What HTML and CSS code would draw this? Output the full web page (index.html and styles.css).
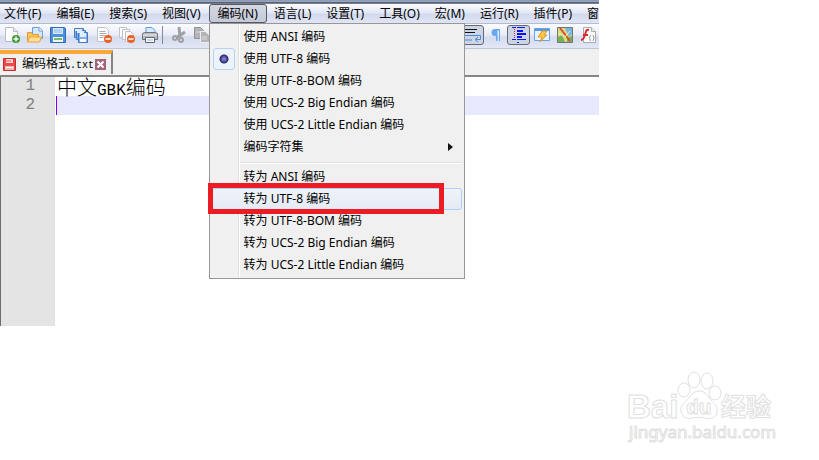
FILE: index.html
```html
<!DOCTYPE html>
<html lang="zh-CN">
<head>
  <meta charset="UTF-8">
  <title>编码格式.txt</title>
  <link rel="stylesheet" href="styles.css">
</head>
<body>

  <main class="app">
    <div class="titlebar"></div>

    <!-- Menu bar -->
    <nav class="menubar">
      <button class="menu">文件(F)</button>
      <button class="menu">编辑(E)</button>
      <button class="menu">搜索(S)</button>
      <button class="menu">视图(V)</button>
      <div class="menu-wrap">
        <button class="menu open">编码(N)</button>
        <div class="dropdown">
          <label class="item"><input type="radio" name="enc">使用 ANSI 编码</label>
          <label class="item"><input type="radio" name="enc" checked>使用 UTF-8 编码</label>
          <label class="item"><input type="radio" name="enc">使用 UTF-8-BOM 编码</label>
          <label class="item"><input type="radio" name="enc">使用 UCS-2 Big Endian 编码</label>
          <label class="item"><input type="radio" name="enc">使用 UCS-2 Little Endian 编码</label>
          <button class="item sub">编码字符集
            <svg width="5" height="8" viewBox="0 0 5 8"><path d="M0 0l5 4-5 4z" fill="#111"/></svg>
          </button>
          <hr>
          <button class="item">转为 ANSI 编码</button>
          <button class="item hover">转为 UTF-8 编码<span class="mark"></span></button>
          <button class="item">转为 UTF-8-BOM 编码</button>
          <button class="item">转为 UCS-2 Big Endian 编码</button>
          <button class="item">转为 UCS-2 Little Endian 编码</button>
        </div>
      </div>
      <button class="menu">语言(L)</button>
      <button class="menu">设置(T)</button>
      <button class="menu">工具(O)</button>
      <button class="menu">宏(M)</button>
      <button class="menu">运行(R)</button>
      <button class="menu">插件(P)</button>
      <button class="menu">窗</button>
    </nav>

    <!-- Toolbar -->
    <div class="toolbar">
      <button class="tool" aria-label="新建">
        <svg viewBox="0 0 16 16"><path d="M1.500 .5h8l4 4v10h-12z" fill="#fdfdfd" stroke="#b9bcc4"/><path d="M9.500 .5v4h4" fill="#e8e8ee" stroke="#b9bcc4"/><circle cx="12" cy="12" r="4" fill="#3d9b35"/><path d="M9.500 12h5M12 9.500v5" stroke="#fff" stroke-width="1.500"/></svg>
      </button>
      <button class="tool" aria-label="打开">
        <svg viewBox="0 0 16 16"><path d="M5.500 .5h7l3 3v8h-10z" fill="#d4e8fb" stroke="#6f9fd8"/><path d="M12 .5v3.500h3.500" fill="#fff" stroke="#6f9fd8"/><path d="M.5 14.500v-9h4l1 2h6v7z" fill="#f7c65c" stroke="#e09a2c"/><path d="M.5 15l2-5h12l-2 5z" fill="#ffe09a" stroke="#e8a33a"/></svg>
      </button>
      <button class="tool" aria-label="保存">
        <svg viewBox="0 0 16 16"><path d="M.5 .5h14l1 1v14H.5z" fill="#4e8fe0" stroke="#2f68bd"/><path d="M3 1h10v6H3z" fill="#d8ebfb"/><path d="M4 3h8M4 5h8" stroke="#8ab8e8"/><path d="M3 10h10v5H3z" fill="#eef7e8"/><path d="M4 12h8" stroke="#78bd60" stroke-width="2"/></svg>
      </button>
      <button class="tool" aria-label="保存全部">
        <svg viewBox="0 0 16 16"><g fill="#7fb0ea" stroke="#4479c4"><path d="M1.500 1.500h9v9h-9z"/><path d="M3.500 3.500h9v9h-9z"/><path d="M5.500 5.500h9v10h-9z"/></g><path d="M2 2h7v2H2zM4 4h7v2H4zM7 6h6v4H7z" fill="#e0effd"/><path d="M7 12h6v3H7z" fill="#fff"/></svg>
      </button>
      <button class="tool" aria-label="关闭">
        <svg viewBox="0 0 16 16"><path d="M1.500 .5h8l3 3v11h-11z" fill="#fdfdfd" stroke="#bfc1c8"/><path d="M3.500 4.500h6M3.500 6.500h7M3.500 8.500h6M3.500 10.500h4" stroke="#aaa"/><circle cx="12" cy="12" r="4" fill="#e8622a"/><path d="M9.500 12h5" stroke="#fff" stroke-width="1.500"/></svg>
      </button>
      <button class="tool" aria-label="关闭全部">
        <svg viewBox="0 0 16 16"><g fill="#fdfdfd" stroke="#bfc1c8"><path d="M.5 .5h7v10h-7z"/><path d="M3.500 2.500h7v10h-7z"/><path d="M6.500 4.500h5l3 3v7h-8z"/></g><circle cx="12" cy="12" r="4" fill="#e8622a"/><path d="M9.500 12h5" stroke="#fff" stroke-width="1.500"/></svg>
      </button>
      <button class="tool" aria-label="打印">
        <svg viewBox="0 0 16 16"><path d="M4 7V.5h6l3 3V7z" fill="#d6ebff" stroke="#5c9be0"/><path d="M.5 6.500l2-1h11l2 1v6H.5z" fill="#b9bcc3" stroke="#6d7178"/><path d="M1 8h14" stroke="#eceef2"/><path d="M3.500 10.500h9v5h-9z" fill="#fff" stroke="#60656d"/><path d="M5 13h6" stroke="#7fb8ee"/></svg>
      </button>
      <span class="divider"></span>
      <button class="tool" aria-label="剪切">
        <svg viewBox="0 0 16 16" fill="none" stroke="#a0a0a4" stroke-width="2"><path d="M8 0l1 10M14 5L5 11" stroke-width="3"/><circle cx="4" cy="11" r="2"/><circle cx="10" cy="13" r="2"/></svg>
      </button>
      <button class="tool" aria-label="复制">
        <svg viewBox="0 0 16 16" fill="#b4b4b8" stroke="#929298"><path d="M.5 .5h6l3 3v8h-9z"/><path d="M6.500 4.500h5l4 4v7h-9z" stroke="#eee"/><path d="M2 5h4M8 10h5M8 12h5" stroke="#ddd"/></svg>
      </button>

      <div class="view-tools">
        <button class="tool pressed" aria-label="自动换行">
          <svg viewBox="0 0 16 16" fill="none"><path d="M0 2.500h12M0 5.500h10" stroke="#111"/><path d="M0 8.500h15.500v4H11M13 10l-3 2.500 3 2.500M0 13h7" stroke="#4a8de0"/></svg>
        </button>
        <button class="tool" aria-label="显示所有字符">
          <svg viewBox="0 0 16 16"><path d="M12 2H7a3.500 3.500 0 0 0 0 7h1v5h1.500V3.500H11V14h1z" fill="#69a8ee"/></svg>
        </button>
        <button class="tool pressed" aria-label="缩进参考线">
          <svg viewBox="0 0 16 16" fill="none" stroke="#0a14f0"><path d="M1 .5h4M6 .5h8M1 12.500h4M6 12.500h9M6 15.500h2"/><path d="M6 4h6M6 7h9M6 10h5" stroke-width="2"/><path d="M3.500 2v10" stroke="#e02020" stroke-dasharray="1 1"/></svg>
        </button>
        <button class="tool" aria-label="自定义语言">
          <svg viewBox="0 0 16 16"><path d="M.5 1.500h15v12H.5z" fill="#e8f3ff" stroke="#6aa2e4"/><path d="M1 3h14" stroke="#5b98e2" stroke-width="2"/><path d="M8 4h5l-3 4h3l-7 7 2-5H4z" fill="#ffc748" stroke="#df9a28"/></svg>
        </button>
        <button class="tool" aria-label="文档结构图">
          <svg viewBox="0 0 16 16"><path d="M.5 .5h15v15H.5z" fill="#d7dd80" stroke="#77756a"/><path d="M8 1h7v6l-3 3z" fill="#74b7e8"/><path d="M1 10l4-2 3 7H1zM10 11l5-2v6h-5z" fill="#74b35b"/><path d="M3 1l10 13" stroke="#d84c3c" stroke-width="2"/><path d="M1 6l7 4 5-6" fill="none" stroke="#f6ecab"/></svg>
        </button>
        <button class="tool" aria-label="函数列表">
          <svg viewBox="0 0 16 16"><path d="M3.500 .5h8l4 4v11h-12z" fill="#fdfdfd" stroke="#a9aab2"/><path d="M11.500 .5v4h4" fill="#eee" stroke="#a9aab2"/><path d="M9 3C6 2 6 5 5 8s-2 5-4 5M3 8h5" fill="none" stroke="#d82828" stroke-width="2"/><path d="M10.500 8q-2 3 0 6M13 8q2 3 0 6" fill="none" stroke="#999"/></svg>
        </button>
      </div>
    </div>

    <!-- Document tabs -->
    <div class="tabs">
      <div class="tab">
        <svg width="13" height="13" viewBox="0 0 13 13"><path d="M.5 .5h12v12H.5z" fill="#e84a4a" stroke="#c92c2c"/><path d="M3 1h7v4H3z" fill="#fbd5d5"/><path d="M3 3h5" stroke="#e06060"/><path d="M2 8h9v4H2z" fill="#f6b4b4"/><path d="M3 9.500h7" stroke="#fff"/></svg>
        <span class="tab-name">编码格式<span class="ext">.txt</span></span>
        <button class="close" aria-label="关闭标签">
          <svg width="11" height="11" viewBox="0 0 11 11"><path d="M0 0h11v11H0z" fill="#a4647c"/><path d="M2.500 2.500l6 6M8.500 2.500l-6 6" stroke="#fff" stroke-width="2"/></svg>
        </button>
      </div>
    </div>

    <!-- Editor -->
    <div class="editor">
      <div class="gutter"><div>1</div><div>2</div></div>
      <div class="code">
        <div class="line"><span class="han">中文</span>GBK<span class="han">编码</span></div>
        <div class="line current"></div>
      </div>
    </div>
  </main>

  <aside class="side">
    <svg class="logo" width="156" height="76" viewBox="0 0 156 76">
      <g class="outline">
        <text x="3" y="48" class="latin">Bai</text>
        <ellipse cx="60" cy="20" rx="6" ry="7"/>
        <ellipse cx="70" cy="10" rx="6" ry="8"/>
        <ellipse cx="83" cy="11" rx="6" ry="8"/>
        <ellipse cx="91" cy="23" rx="6" ry="7"/>
        <path d="M75 21c7 0 9 6 12 9 4 4 7 7 6 12-1 7-8 7-12 6-4-1-8-1-12 0-5 1-11 0-12-7-1-5 3-8 6-11s6-9 12-9z"/>
        <text x="62" y="44" class="du">du</text>
        <text x="97" y="46" class="cjk">经验</text>
        <text x="5" y="68" class="url">jingyan.baidu.com</text>
      </g>
    </svg>
  </aside>

</body>
</html>
```

FILE: styles.css
```css
* {
  box-sizing: border-box;
}

body {
  margin: 0;
  min-height: 100vh;
  display: flex;
  align-items: flex-start;
  background: #fff;
  color: #000;
  font-family: "Noto Sans", "Noto Sans CJK SC", sans-serif;
  font-size: 12px;
}

button {
  margin: 0;
  padding: 0;
  border: 0;
  background: none;
  color: inherit;
  font: inherit;
}

.app {
  flex: 1;
  min-width: 0;
  overflow: hidden;
}

.titlebar {
  height: 4px;
  background: linear-gradient(#8795b4, #9baac6 50%, #15181f 75%, #dfe5f2);
}

/* ===== Menu bar ===== */
.menubar {
  display: flex;
  height: 20px;
  background: linear-gradient(#fafbfe, #e3e8f5 45%, #d3daed 55%, #e0e5f5);
  border-bottom: 1px solid #b4bccd;
}

.menu {
  flex: none;
  height: 19px;
  padding: 0 7px 0 6px;
  border: 1px solid transparent;
  line-height: 18px;
  white-space: nowrap;
}

.menu:first-child {
  padding-left: 3px;
}

.menu.open {
  padding: 0 8px;
  border-color: #55585f;
  border-radius: 3px;
  background: linear-gradient(#d4d8e2, #c3c9d7);
}

.menu-wrap {
  position: relative;
}

.dropdown {
  position: absolute;
  z-index: 2;
  top: 19px;
  left: 0;
  width: 256px;
  padding: 2px;
  border: 1px solid #979797;
  background: linear-gradient(to right, #f1f1f1 28px, #e0e0e0 28px, #e0e0e0 29px, #fff 29px, #fff 30px, #f0f0f0 30px);
}

.item {
  position: relative;
  display: flex;
  align-items: center;
  width: 100%;
  height: 22px;
  padding: 0 8px 0 31px;
  border: 1px solid transparent;
  border-radius: 3px;
  line-height: 20px;
  white-space: nowrap;
}

.item input {
  appearance: none;
  position: absolute;
  left: 0;
  top: -1px;
  width: 22px;
  height: 22px;
  margin: 0;
  border-radius: 3px;
}

.item input:checked {
  border: 1px solid #b5d2f3;
  background: radial-gradient(circle at 10px 10px, #8080c0 1px, #26267a 4px, #eef3fa 5px);
}

.sub {
  justify-content: space-between;
}

.dropdown hr {
  height: 2px;
  margin: 4px 0 2px 28px;
  border: 0;
  border-top: 1px solid #e0e0e0;
  background: #fff;
}

.item.hover {
  border-color: #aecff7;
  background: linear-gradient(#f0f3f8, #e4ebf5);
}

/* red frame round the command to choose */
.mark {
  position: absolute;
  top: -6px;
  left: -5px;
  right: 17px;
  bottom: -5px;
  border: 5px solid #ed1c24;
}

/* ===== Toolbar ===== */
.toolbar {
  display: flex;
  align-items: center;
  height: 25px;
  padding-bottom: 2px;
  background: linear-gradient(#fbfcff, #e8ecf8 45%, #d5dcee 55%, #e2e7f6);
  border-bottom: 1px solid #bfc6d6;
}

.tool {
  flex: none;
  display: flex;
  align-items: center;
  justify-content: center;
  width: 23px;
  height: 22px;
}

.tool svg {
  width: 16px;
  height: 16px;
}

.tool.pressed {
  height: 20px;
  border: 1px solid #666a73;
  border-radius: 3px;
  background: #cdd4e3;
}

.divider {
  width: 1px;
  height: 18px;
  margin: 0 4px 0 1px;
  background: #84878f;
}

.view-tools {
  display: flex;
  align-items: center;
  margin-left: auto;
}

/* ===== Tabs ===== */
.tabs {
  display: flex;
  align-items: flex-end;
  height: 28px;
  padding-bottom: 1px;
  background: #f0f0f0;
  border-bottom: 2px solid #858585;
}

.tab {
  display: flex;
  align-items: center;
  height: 24px;
  padding: 0 5px 0 3px;
  border-top: 4px solid #faa737;
  border-right: 2px solid #858585;
}

.tab-name {
  margin: 0 1px 0 6px;
  font-family: "Noto Sans CJK SC", sans-serif;
  line-height: 18px;
  white-space: nowrap;
}

.ext {
  font-family: "Liberation Mono", monospace;
  font-size: 10px;
}

.close {
  display: flex;
}

/* ===== Editor ===== */
.editor {
  display: flex;
  min-height: 249px;
  font-family: "Liberation Mono", monospace;
  font-size: 16px;
  line-height: 19px;
}

.gutter {
  width: 55px;
  padding-right: 20px;
  border-left: 1px solid #6d6d6d;
  background: #e4e4e4;
  color: #808080;
  text-align: right;
}

.code {
  flex: 1;
}

.line {
  height: 19px;
  padding-left: 2px;
  white-space: nowrap;
}

.han {
  font-family: "Noto Sans CJK SC", sans-serif;
  font-size: 20px;
  font-weight: 300;
}

.line.current {
  margin-left: 1px;
  border-left: 1px solid #8000ff;
  background: #e8e8ff;
}

/* ===== Watermark ===== */
.side {
  flex: none;
  align-self: flex-end;
  width: 220px;
  padding: 0 0 14px 25px;
}

.logo {
  display: block;
}

.outline {
  fill: #fff;
  stroke: #e0e0e0;
  stroke-width: 1px;
}

.latin {
  font: bold 33px "Liberation Sans", sans-serif;
}

.du {
  font: bold 21px "Liberation Sans", sans-serif;
}

.cjk {
  font: bold 25px "Noto Sans CJK SC", sans-serif;
}

.url {
  font: 17px "Noto Sans", sans-serif;
}
```
